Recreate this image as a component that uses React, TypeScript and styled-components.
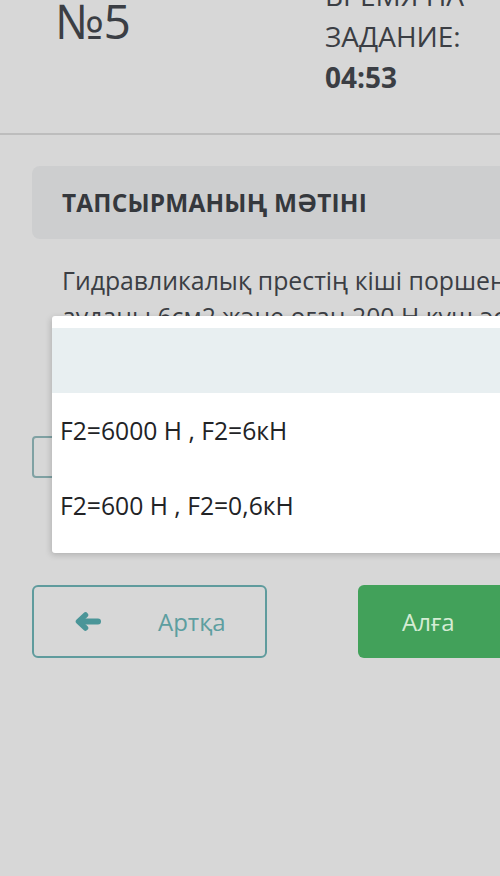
import React from "react";
import styled, { createGlobalStyle } from "styled-components";

const Global = createGlobalStyle`
  html, body {
    margin: 0;
    padding: 0;
    background: #d7d7d7;
    overflow: hidden;
  }
  body {
    font-family: "Open Sans", "Noto Sans", sans-serif;
    color: #35383d;
  }
`;

const Page = styled.div`
  position: relative;
  width: 500px;
  height: 876px;
  overflow: hidden;
  background: #d7d7d7;
`;

const Header = styled.header`
  display: grid;
  grid-template-columns: 270px 1fr;
  height: 135px;
  box-sizing: border-box;
  padding-left: 55px;
  border-bottom: 2px solid #bdbdbd;
  overflow: hidden;
`;

const Number = styled.div`
  font-size: 48px;
  line-height: 48px;
  margin-top: -3px;
  font-weight: 400;
  color: #3b3e44;
  letter-spacing: -0.5px;
`;

const Timer = styled.div`
  margin-top: -25px;
  font-size: 28px;
  line-height: 41px;
  color: #3b3e44;
  white-space: nowrap;
`;

const TimerLine = styled.div<{ $bold?: boolean }>`
  font-weight: ${(p) => (p.$bold ? 700 : 400)};
`;

const Content = styled.main`
  width: 640px;
  padding-left: 32px;
  padding-top: 31px;
  box-sizing: border-box;
`;

const TitleCard = styled.div`
  display: flex;
  align-items: center;
  height: 73px;
  padding-left: 30px;
  background: #cdcecf;
  border-radius: 8px;
`;

const Title = styled.h2`
  margin: 0;
  font-size: 24.4px;
  font-weight: 700;
  color: #35383d;
  letter-spacing: 0.2px;
`;

const Question = styled.div`
  margin-top: 23px;
  padding-left: 30px;
  font-size: 24.8px;
  line-height: 36px;
  color: #3b3e44;
  white-space: nowrap;
  height: 108px;
`;

const SelectBox = styled.div`
  margin-top: 66px;
  height: 42px;
  box-sizing: border-box;
  border: 2px solid #7fa1a3;
  border-radius: 4px;
`;

const Buttons = styled.div`
  display: flex;
  gap: 91px;
  margin-top: 107px;
`;

const BackButton = styled.button`
  display: flex;
  align-items: center;
  gap: 57px;
  width: 235px;
  height: 73px;
  box-sizing: border-box;
  padding: 0 0 0 41px;
  border: 2px solid #5f9b9d;
  border-radius: 6px;
  background: transparent;
  font-family: "Open Sans", "Noto Sans", sans-serif;
  font-size: 24px;
  color: #5d9ea0;
`;

const NextButton = styled.button`
  display: flex;
  align-items: center;
  width: 235px;
  height: 73px;
  padding: 0 0 0 44px;
  border: none;
  border-radius: 6px;
  background: #42a15a;
  font-family: "Open Sans", "Noto Sans", sans-serif;
  font-size: 24px;
  color: #d5ecd4;
`;

const Dropdown = styled.ul`
  position: absolute;
  left: 52px;
  top: 316px;
  width: 500px;
  margin: 0;
  padding: 12px 0 10px;
  list-style: none;
  background: #ffffff;
  border-radius: 3px;
  box-shadow: -1px 2px 6px rgba(0, 0, 0, 0.18);
`;

const Option = styled.li<{ $placeholder?: boolean }>`
  display: flex;
  align-items: center;
  height: ${(p) => (p.$placeholder ? 65 : 75)}px;
  padding-left: 8px;
  font-size: 24.7px;
  color: #222326;
  background: ${(p) => (p.$placeholder ? "#e8eff1" : "#ffffff")};
`;

const ArrowIcon = () => (
  <svg width="26" height="19" viewBox="0 0 26 19" fill="none">
    <path
      d="M10.5 3 L3.5 9.5 L10.5 16"
      stroke="#4a9598"
      strokeWidth="5.5"
      strokeLinecap="round"
      strokeLinejoin="round"
    />
    <path d="M5 9.5 H23" stroke="#4a9598" strokeWidth="6" strokeLinecap="round" />
  </svg>
);

export default function App() {
  return (
    <Page>
      <Global />
      <Header>
        <Number>№5</Number>
        <Timer>
          <TimerLine>ВРЕМЯ НА</TimerLine>
          <TimerLine>ЗАДАНИЕ:</TimerLine>
          <TimerLine $bold>04:53</TimerLine>
        </Timer>
      </Header>
      <Content>
        <TitleCard>
          <Title>ТАПСЫРМАНЫҢ МӘТІНІ</Title>
        </TitleCard>
        <Question>
          Гидравликалық престің кіші поршенінің
          <br />
          ауданы 6см2 және оған 200 Н күш әсер етеді.
          <br />
          Үлкен поршеннің ауданы 180 см2. Үлкен
        </Question>
        <SelectBox />
        <Buttons>
          <BackButton>
            <ArrowIcon />
            <span>Артқа</span>
          </BackButton>
          <NextButton>Алға</NextButton>
        </Buttons>
      </Content>
      <Dropdown>
        <Option $placeholder />
        <Option>F2=6000 Н , F2=6кН</Option>
        <Option>F2=600 Н , F2=0,6кН</Option>
      </Dropdown>
    </Page>
  );
}
